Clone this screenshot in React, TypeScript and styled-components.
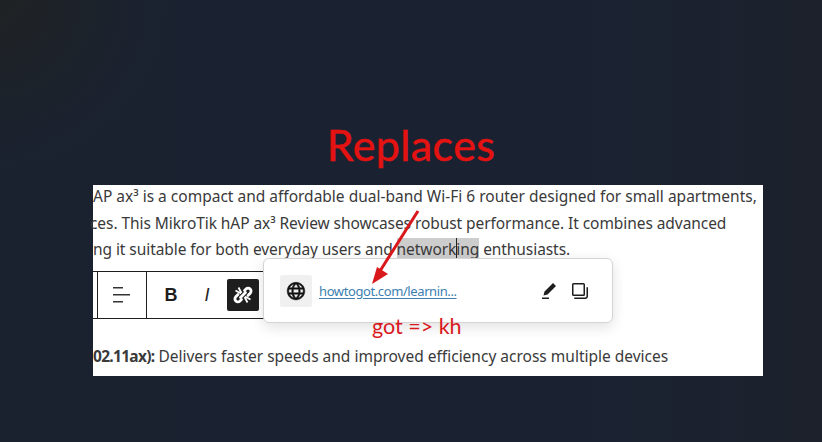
import styled, { createGlobalStyle } from "styled-components";

const GlobalStyle = createGlobalStyle`
  html, body {
    margin: 0;
    padding: 0;
    height: 100%;
    background: #1a2130;
  }
`;

const Stage = styled.div`
  width: 822px;
  height: 442px;
  overflow: hidden;
  padding-top: 119px;
  box-sizing: border-box;
  background:
    radial-gradient(circle at 0 0, #1f2224 0, rgba(31, 34, 36, 0) 170px),
    linear-gradient(90deg, #1a2230 0%, #1a2232 70%, #1c212b 100%);
`;

const Heading = styled.h1`
  margin: 0 0 15px;
  height: 51px;
  text-align: center;
  font-family: "Lato", sans-serif;
  font-weight: 400;
  font-size: 43px;
  letter-spacing: 0.4px;
  line-height: 51px;
  color: #e51212;
  -webkit-text-stroke: 0.5px #e51212;
`;

const Panel = styled.div`
  display: flow-root;
  position: relative;
  width: 670px;
  height: 191px;
  margin-left: 93px;
  background: #fff;
  color: #3a3a3a;
  font-family: "Noto Sans", sans-serif;
  font-size: 15.5px;
`;

const Paragraph = styled.div`
  margin-top: -2px;
  white-space: nowrap;
`;

const TextLine = styled.div<{ $tight?: boolean; $clip?: boolean }>`
  height: 26.5px;
  line-height: 26.5px;
  letter-spacing: ${(p) => (p.$tight ? "-0.07px" : "0")};
  margin-left: ${(p) => (p.$clip ? "-3px" : "0")};
`;

const Selected = styled.span`
  background: #cdcdcd;
`;

const Caret = styled.span`
  border-left: 1px solid #222;
  margin-right: -1px;
`;

const Toolbar = styled.div`
  display: flex;
  width: 200px;
  height: 46px;
  margin-top: 8.5px;
  border-top: 1px solid #1e1e1e;
  border-bottom: 1px solid #1e1e1e;
`;

const ToolGroup = styled.div<{ $width: number }>`
  display: flex;
  align-items: center;
  flex: none;
  width: ${(p) => p.$width}px;
  border-left: 1px solid #1e1e1e;
  box-sizing: border-box;
`;

const FormatGroup = styled(ToolGroup)`
  gap: 4px;
  padding-left: 8px;
`;

const EdgeGroup = styled.div`
  width: 4px;
  flex: none;
`;

const AlignBox = styled.div`
  display: flex;
  justify-content: center;
  width: 100%;
  color: #333;
`;

const FormatButton = styled.div<{ $italic?: boolean }>`
  width: 32px;
  text-align: center;
  flex: none;
  font-family: "Liberation Sans", sans-serif;
  font-size: 18px;
  font-weight: ${(p) => (p.$italic ? 400 : 700)};
  font-style: ${(p) => (p.$italic ? "italic" : "normal")};
  color: #1e1e1e;
`;

const LinkButton = styled.div`
  display: flex;
  align-items: center;
  justify-content: center;
  flex: none;
  width: 32px;
  height: 32px;
  border-radius: 2px;
  background: #1e1e1e;
  color: #fff;
`;

const BottomLine = styled.div`
  margin-top: 24px;
  line-height: 27px;
  white-space: nowrap;

  b {
    font-weight: 700;
    letter-spacing: -0.7px;
  }
`;

const Popover = styled.div`
  position: absolute;
  left: 170px;
  top: 73px;
  box-sizing: border-box;
  display: flex;
  align-items: center;
  width: 350px;
  height: 65px;
  padding: 0 16px;
  background: #fff;
  border: 1px solid #d4d4d4;
  border-radius: 6px;
  box-shadow: 0 4px 14px rgba(0, 0, 0, 0.12);
`;

const GlobeTile = styled.div`
  display: flex;
  align-items: center;
  justify-content: center;
  flex: none;
  width: 32px;
  height: 32px;
  background: #f0f0f0;
  border-radius: 2px;
  color: #111;
`;

const LinkText = styled.a`
  margin-left: 7px;
  flex: 1;
  font-size: 13px;
  letter-spacing: -0.4px;
  color: #3b7fb1;
  text-decoration: underline;
  text-underline-offset: 2px;
`;

const ActionIcons = styled.div`
  display: flex;
  align-items: center;
  gap: 7px;
  margin-right: 4px;
  color: #1e1e1e;
`;

const Annotation = styled.div`
  position: absolute;
  left: 279px;
  top: 128px;
  font-family: "Lato", sans-serif;
  font-size: 21.5px;
  line-height: 26px;
  color: #d9181c;
  white-space: nowrap;
`;

const ArrowOverlay = styled.svg`
  position: absolute;
  left: 0;
  top: 0;
  pointer-events: none;
`;

const AlignIcon = () => (
  <svg width="18" height="18" viewBox="0 0 18 18" fill="currentColor">
    <rect x="0" y="1" width="10" height="1.5" />
    <rect x="0" y="8" width="17" height="1.5" />
    <rect x="0" y="15" width="10" height="1.5" />
  </svg>
);

const BrokenLinkIcon = () => (
  <svg width="24" height="24" viewBox="0 0 24 24" fill="none" stroke="currentColor">
    <g strokeWidth="2.8" strokeLinecap="round">
      <path d="M13.5 7.5 15 6a3 3 0 0 1 4.2 0 3 3 0 0 1 0 4.2L17 12.4" />
      <path d="M10.5 16.5 9 18a3 3 0 0 1-4.2 0 3 3 0 0 1 0-4.2L7 11.6" />
      <path d="M9.5 14.5 14.5 9.5" />
    </g>
    <g strokeWidth="1.8">
      <path d="M7.5 4.5 10.5 10M4.5 7.5l5.5 3M16.5 19.5l-3-5.5M19.5 16.5l-5.5-3" />
    </g>
  </svg>
);

const GlobeIcon = () => (
  <svg width="24" height="24" viewBox="0 0 24 24" fill="currentColor" stroke="currentColor" strokeWidth="0.5">
    <path d="M12 3.3c-4.8 0-8.8 3.9-8.8 8.8 0 4.8 3.9 8.8 8.8 8.8 4.8 0 8.8-3.9 8.8-8.8s-4-8.8-8.8-8.8zm6.5 5.5h-2.6C15.4 7.3 14.8 6 14 5c2 .6 3.6 2 4.5 3.8zm.7 3.2c0 .6-.1 1.2-.2 1.8h-2.9c.1-.6.1-1.2.1-1.8s-.1-1.2-.1-1.8H19c.2.6.2 1.2.2 1.8zM12 18.7c-1-.7-1.8-1.9-2.3-3.5h4.6c-.5 1.6-1.3 2.9-2.3 3.5zm-2.6-4.9c-.1-.6-.1-1.1-.1-1.8 0-.6.1-1.2.1-1.8h5.2c.1.6.1 1.1.1 1.8s-.1 1.2-.1 1.8H9.4zM4.8 12c0-.6.1-1.2.2-1.8h2.9c-.1.6-.1 1.2-.1 1.8 0 .6.1 1.2.1 1.8H5c-.2-.6-.2-1.2-.2-1.8zM12 5.3c1 .7 1.8 1.9 2.3 3.5H9.7c.5-1.6 1.3-2.9 2.3-3.5zM10 5c-.8 1-1.4 2.3-1.9 3.8H5.5C6.4 7 8 5.6 10 5zM5.5 15.3h2.6c.4 1.5 1 2.8 1.9 3.8-2-.6-3.6-2-4.5-3.8zm8.5 3.7c.8-1 1.4-2.3 1.9-3.8h2.6c-.9 1.8-2.5 3.2-4.5 3.8z" />
  </svg>
);

const PencilIcon = () => (
  <svg width="24" height="24" viewBox="0 0 24 24" fill="currentColor">
    <path d="m19 7-3-3-8.5 8.5-1 4 4-1L19 7Zm-7 11.5H5V20h7v-1.5Z" />
  </svg>
);

const CopyIcon = () => (
  <svg width="24" height="24" viewBox="0 0 24 24" fill="currentColor">
    <path
      fillRule="evenodd"
      clipRule="evenodd"
      d="M5.625 5.5h9.75c.069 0 .125.056.125.125v9.75a.125.125 0 0 1-.125.125h-9.75a.125.125 0 0 1-.125-.125v-9.75c0-.069.056-.125.125-.125ZM4 5.625C4 4.728 4.728 4 5.625 4h9.75C16.273 4 17 4.728 17 5.625v9.75c0 .898-.727 1.625-1.625 1.625h-9.75A1.625 1.625 0 0 1 4 15.375v-9.75Zm14.5 11.656v-9H20v9C20 18.8 18.77 20 17.251 20H6.25v-1.5h11.001c.69 0 1.249-.528 1.249-1.219Z"
    />
  </svg>
);

const App = () => (
  <>
    <GlobalStyle />
    <Stage>
      <Heading>Replaces</Heading>
      <Panel>
        <Paragraph>
          <TextLine>AP ax³ is a compact and affordable dual-band Wi-Fi 6 router designed for small apartments,</TextLine>
          <TextLine $tight $clip>
            ces. This MikroTik hAP ax³ Review showcases robust performance. It combines advanced
          </TextLine>
          <TextLine $tight>
            ng it suitable for both everyday users and{" "}
            <Selected>
              network
              <Caret />
              ing
            </Selected>{" "}
            enthusiasts.
          </TextLine>
        </Paragraph>
        <Toolbar>
          <EdgeGroup />
          <ToolGroup $width={49}>
            <AlignBox>
              <AlignIcon />
            </AlignBox>
          </ToolGroup>
          <FormatGroup $width={147}>
            <FormatButton>B</FormatButton>
            <FormatButton $italic>I</FormatButton>
            <LinkButton>
              <BrokenLinkIcon />
            </LinkButton>
          </FormatGroup>
        </Toolbar>
        <BottomLine>
          <b>02.11ax):</b> Delivers faster speeds and improved efficiency across multiple devices
        </BottomLine>
        <Popover>
          <GlobeTile>
            <GlobeIcon />
          </GlobeTile>
          <LinkText>howtogot.com/learnin...</LinkText>
          <ActionIcons>
            <PencilIcon />
            <CopyIcon />
          </ActionIcons>
        </Popover>
        <Annotation>got =&gt; kh</Annotation>
        <ArrowOverlay width="670" height="191" viewBox="0 0 670 191">
          <line x1="325" y1="26" x2="287" y2="86" stroke="#d9181c" strokeWidth="3" />
          <polygon points="279,99 284,82 295,89" fill="#d9181c" />
        </ArrowOverlay>
      </Panel>
    </Stage>
  </>
);

export default App;
